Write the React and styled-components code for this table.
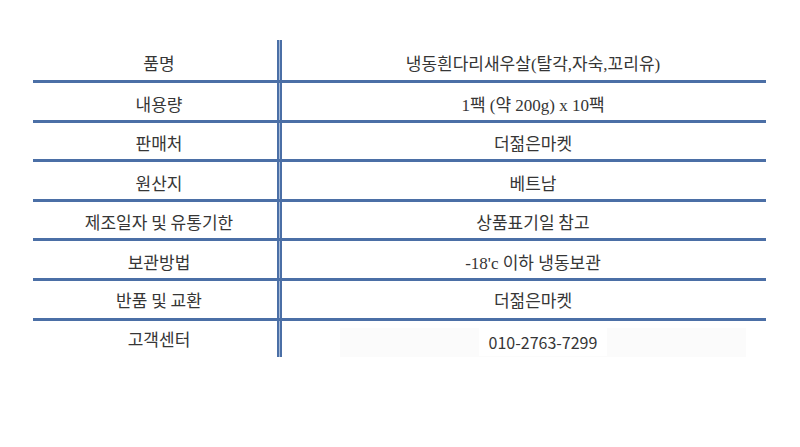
import React from 'react'
import styled, { createGlobalStyle } from 'styled-components'

const GlobalStyle = createGlobalStyle`
  html, body {
    margin: 0;
    padding: 0;
    background: #ffffff;
  }
  body {
    font-family: "Noto Sans CJK KR", "Noto Sans", sans-serif;
    color: #333333;
  }
`

const Page = styled.div`
  width: 800px;
  height: 447px;
  padding: 40px 0 0 33px;
  box-sizing: border-box;
`

const Table = styled.div`
  width: 733px;
  display: flex;
  flex-direction: column;
`

const Row = styled.div`
  display: grid;
  grid-template-columns: 244px 5px 1fr;
  height: ${props => props.h || 36.6}px;
  border-bottom: ${props => props.last ? 'none' : '3px solid #4b6fa6'};
`

const Label = styled.div`
  display: flex;
  align-items: center;
  justify-content: center;
  padding: ${props => props.shift || 0}px 0 0 8px;
  font-size: 17px;
  color: #363636;
  white-space: nowrap;
`

const Divider = styled.div`
  background: linear-gradient(to right, #4b6fa6 0 2px, #a7bbd8 2px 3px, #4b6fa6 3px 5px);
`

const Value = styled.div`
  display: flex;
  align-items: center;
  justify-content: center;
  padding: ${props => props.shift || 0}px 0 0 18px;
  font-family: ${props => props.sans
    ? '"Noto Sans CJK KR", "Noto Sans", sans-serif'
    : '"Liberation Serif", "Noto Sans CJK KR", serif'};
  font-size: 17px;
  color: #363636;
  white-space: nowrap;
`

const PhoneBox = styled.div`
  display: flex;
  align-items: center;
  justify-content: center;
  margin: 7px 20px 0 58px;
  background: #fbfbfb;
  font-family: "Noto Sans CJK KR", "Noto Sans", sans-serif;
  font-size: 16px;
  color: #363636;
`

const PhoneText = styled.span`
  background: #ffffff;
  padding: 2px 10px;
`

const rows = [
  { label: '품명', value: '냉동흰다리새우살(탈각,자숙,꼬리유)', h: 40, shift: 4 },
  { label: '내용량', value: '1팩 (약 200g) x 10팩', shift: 5 },
  { label: '판매처', value: '더젊은마켓', shift: 4, sans: true },
  { label: '원산지', value: '베트남', shift: 5, sans: true },
  { label: '제조일자 및 유통기한', value: '상품표기일 참고', shift: 2, sans: true },
  { label: '보관방법', value: '-18\'c 이하 냉동보관', shift: 3 },
  { label: '반품 및 교환', value: '더젊은마켓', shift: 0, sans: true },
]

export default function App() {
  return (
    <Page>
      <GlobalStyle />
      <Table>
        {rows.map((row, index) => (
          <Row key={index} h={row.h}>
            <Label shift={row.shift}>{row.label}</Label>
            <Divider />
            <Value shift={row.shift} sans={row.sans}>{row.value}</Value>
          </Row>
        ))}
        <Row h={36} last>
          <Label>고객센터</Label>
          <Divider />
          <PhoneBox>
            <PhoneText>010-2763-7299</PhoneText>
          </PhoneBox>
        </Row>
      </Table>
    </Page>
  )
}
